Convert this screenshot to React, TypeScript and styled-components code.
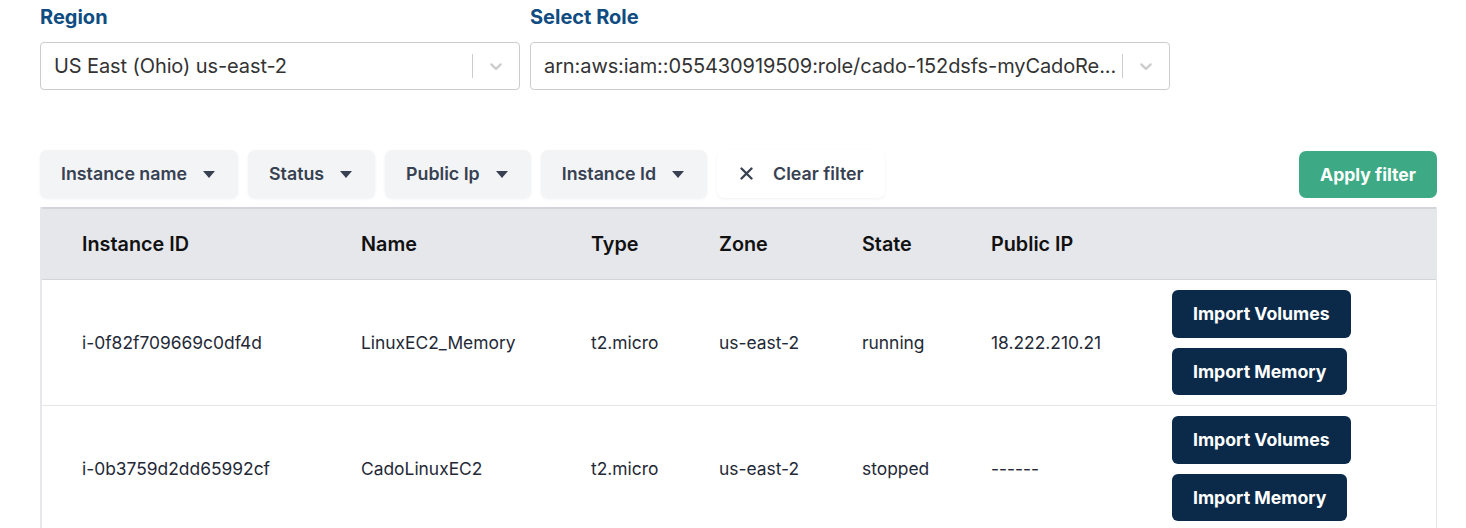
import React from "react";
import styled, { createGlobalStyle } from "styled-components";

const Global = createGlobalStyle`
  html, body { margin: 0; padding: 0; background: #ffffff; }
  body { font-family: Inter, "Noto Sans", sans-serif; color: #1f2937; }
  * { box-sizing: border-box; }
`;

const Page = styled.div`
  padding: 5px 29px 0 40px;
  display: flex;
  flex-direction: column;
`;

const SelectRow = styled.div`
  display: flex;
  gap: 10px;
`;

const Field = styled.div<{ $w: number }>`
  width: ${(p) => p.$w}px;
  display: flex;
  flex-direction: column;
  gap: 12px;
`;

const Label = styled.div`
  font-size: 20px;
  line-height: 25px;
  font-weight: 700;
  color: #0f4c81;
`;

const SelectBox = styled.div`
  height: 48px;
  border: 1px solid #cccccc;
  border-radius: 4px;
  display: flex;
  align-items: center;
  background: #fff;
`;

const SelectValue = styled.div`
  flex: 1;
  min-width: 0;
  padding: 0 0 0 13px;
  font-size: 20px;
  letter-spacing: -0.1px;
  color: #333333;
  white-space: nowrap;
`;

const Separator = styled.span`
  width: 1px;
  height: 24px;
  background: #cccccc;
`;

const Indicator = styled.div`
  width: 46px;
  display: flex;
  align-items: center;
  justify-content: center;
`;

const FilterBar = styled.div`
  margin-top: 60px;
  display: flex;
  align-items: center;
  gap: 10px;
`;

const FilterButton = styled.button<{ $plain?: boolean }>`
  height: 48px;
  padding: ${(p) => (p.$plain ? "0 21px 0 23px" : "0 23px 0 21px")};
  border: none;
  border-radius: 7px;
  background: ${(p) => (p.$plain ? "#ffffff" : "#f3f4f6")};
  box-shadow: 0 1px 3px rgba(0, 0, 0, 0.06);
  display: flex;
  align-items: center;
  gap: ${(p) => (p.$plain ? "20px" : "16px")};
  font-family: Inter, sans-serif;
  font-size: 17.8px;
  line-height: 22px;
  padding-bottom: 1px;
  font-weight: 600;
  color: #374151;
  cursor: pointer;
`;

const Caret = styled.span`
  width: 0;
  height: 0;
  border-left: 6.5px solid transparent;
  border-right: 6.5px solid transparent;
  border-top: 7px solid #374151;
  margin-top: 2px;
`;

const Spacer = styled.div`
  flex: 1;
`;

const ApplyButton = styled.button`
  height: 47px;
  width: 138px;
  border: none;
  border-radius: 7px;
  background: #3daa85;
  color: #ffffff;
  font-family: Inter, sans-serif;
  font-size: 17.6px;
  font-weight: 700;
  padding-bottom: 1px;
  cursor: pointer;
`;

const Table = styled.div`
  margin-top: 9px;
  border-left: 2px solid #e5e7eb;
  border-right: 1px solid #e5e7eb;
`;

const cols = "279px 230px 128px 143px 129px 181px 1fr";

const HeaderRow = styled.div`
  display: grid;
  grid-template-columns: ${cols};
  align-items: center;
  height: 73px;
  padding-left: 40px;
  background: #e5e7eb;
  border-top: 2px solid #d1d5db;
  border-bottom: 1px solid #d1d5db;
  font-size: 19.8px;
  font-weight: 600;
  color: #111111;
`;

const BodyRow = styled.div`
  display: grid;
  grid-template-columns: ${cols};
  align-items: center;
  padding: 10px 0 10px 40px;
  border-bottom: 1px solid #e5e7eb;
  font-size: 17.4px;
  color: #1f2937;
`;

const Actions = styled.div`
  display: flex;
  flex-direction: column;
  align-items: flex-start;
  gap: 10px;
`;

const DarkButton = styled.button`
  height: 47.5px;
  padding: 0 21px;
  border: none;
  border-radius: 6px;
  background: #0b2a4a;
  color: #ffffff;
  font-family: Inter, sans-serif;
  font-size: 17.7px;
  font-weight: 700;
  cursor: pointer;
`;

const Chevron = () => (
  <svg width="20" height="20" viewBox="0 0 20 20" aria-hidden="true">
    <path
      fill="#cccccc"
      d="M4.516 7.548c0.436-0.446 1.043-0.481 1.576 0l3.908 3.747 3.908-3.747c0.533-0.481 1.141-0.446 1.574 0 0.436 0.445 0.408 1.197 0 1.615-0.406 0.418-4.695 4.502-4.695 4.502-0.217 0.223-0.502 0.335-0.787 0.335s-0.57-0.112-0.789-0.335c0 0-4.287-4.084-4.695-4.502s-0.436-1.17 0-1.615z"
    />
  </svg>
);

const XIcon = () => (
  <svg width="13" height="13" viewBox="0 0 13 13" aria-hidden="true">
    <path d="M1.5 1.5L11.5 11.5M11.5 1.5L1.5 11.5" stroke="#374151" strokeWidth="2.3" strokeLinecap="round" />
  </svg>
);

const Select = ({ label, value, width }: { label: string; value: string; width: number }) => (
  <Field $w={width}>
    <Label>{label}</Label>
    <SelectBox>
      <SelectValue>{value}</SelectValue>
      <Separator />
      <Indicator>
        <Chevron />
      </Indicator>
    </SelectBox>
  </Field>
);

const rows = [
  ["i-0f82f709669c0df4d", "LinuxEC2_Memory", "t2.micro", "us-east-2", "running", "18.222.210.21"],
  ["i-0b3759d2dd65992cf", "CadoLinuxEC2", "t2.micro", "us-east-2", "stopped", "------"],
];

export default function App() {
  return (
    <>
      <Global />
      <Page>
        <SelectRow>
          <Select label="Region" value="US East (Ohio) us-east-2" width={480} />
          <Select
            label="Select Role"
            value="arn:aws:iam::055430919509:role/cado-152dsfs-myCadoRe..."
            width={640}
          />
        </SelectRow>
        <FilterBar>
          {["Instance name", "Status", "Public Ip", "Instance Id"].map((f) => (
            <FilterButton key={f}>
              {f}
              <Caret />
            </FilterButton>
          ))}
          <FilterButton $plain>
            <XIcon />
            Clear filter
          </FilterButton>
          <Spacer />
          <ApplyButton>Apply filter</ApplyButton>
        </FilterBar>
        <Table>
          <HeaderRow>
            <div>Instance ID</div>
            <div>Name</div>
            <div>Type</div>
            <div>Zone</div>
            <div>State</div>
            <div>Public IP</div>
            <div />
          </HeaderRow>
          {rows.map((r) => (
            <BodyRow key={r[0]}>
              {r.map((c, i) => (
                <div key={i}>{c}</div>
              ))}
              <Actions>
                <DarkButton>Import Volumes</DarkButton>
                <DarkButton>Import Memory</DarkButton>
              </Actions>
            </BodyRow>
          ))}
        </Table>
      </Page>
    </>
  );
}
